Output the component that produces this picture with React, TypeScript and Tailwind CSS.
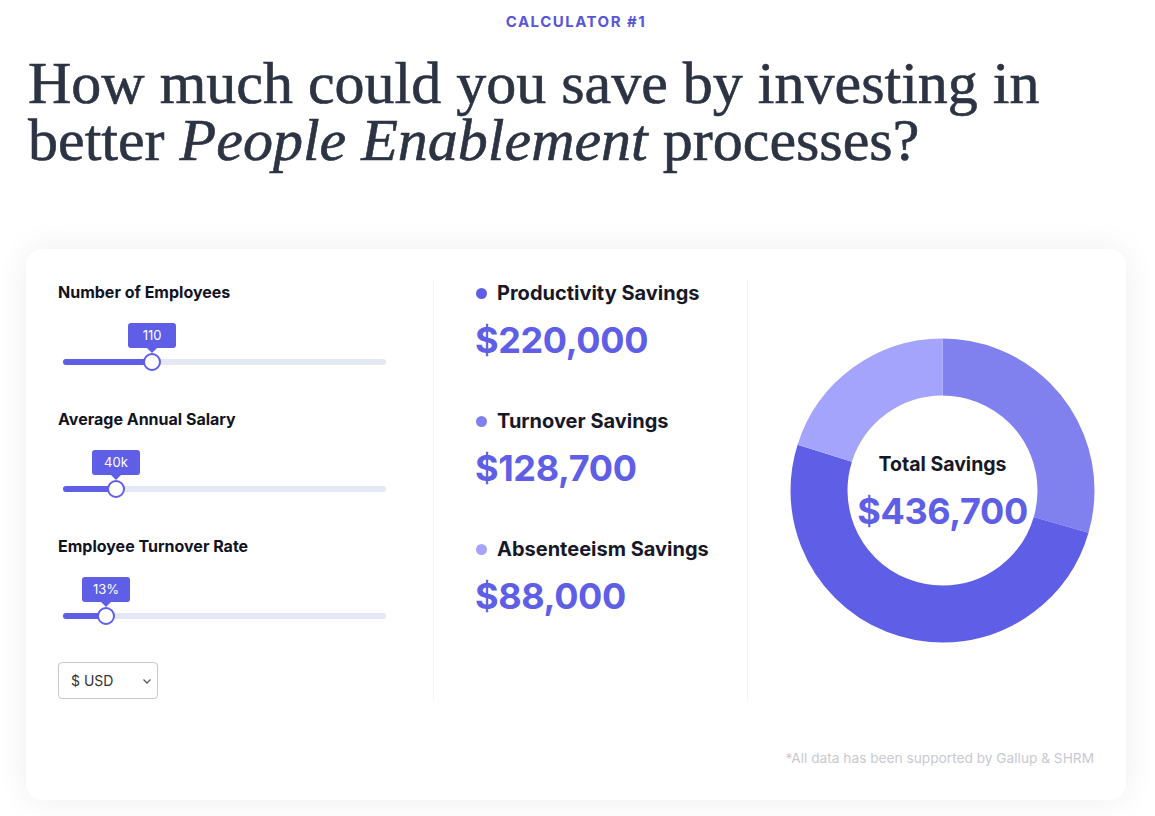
import React from 'react'

const sans = { fontFamily: 'Inter, "Noto Sans", sans-serif' }

type SliderProps = {
  label: string
  value: string
  percent: number
}

const Slider = ({ label, value, percent }: SliderProps) => {
  return (
    <div className="flex flex-col">
      <div className="h-5 text-[16px] font-bold leading-5 text-[#111322]">{label}</div>
      <div className="relative mt-[21px] ml-[5px] h-[42px] w-[323px]">
        <div
          className="absolute top-0 flex -translate-x-1/2 flex-col items-center"
          style={{ left: `${percent}%` }}
        >
          <div className="flex h-[25px] w-12 items-center justify-center rounded-[3px] bg-[#5f5ee6] text-[13px] text-white">
            {value}
          </div>
          <div className="h-0 w-0 border-x-[5px] border-t-[5px] border-x-transparent border-t-[#5f5ee6]" />
        </div>
        <div className="absolute inset-x-0 top-[36px] h-[6px] rounded-full bg-[#e4e8f4]">
          <div
            className="h-full rounded-full bg-[#5f5ee6]"
            style={{ width: `${percent}%` }}
          />
        </div>
        <div
          className="absolute top-[30px] h-[18px] w-[18px] -translate-x-1/2 rounded-full border-2 border-[#5f5ee6] bg-white"
          style={{ left: `${percent}%` }}
        />
      </div>
    </div>
  )
}

type SavingProps = {
  label: string
  amount: string
  dot: string
}

const Saving = ({ label, amount, dot }: SavingProps) => (
  <div className="flex flex-col">
    <div className="flex h-6 items-center">
      <span className={`mr-[10px] ml-[5px] h-[11px] w-[11px] rounded-full ${dot}`} />
      <span className="text-[20px] font-bold text-[#171827]">{label}</span>
    </div>
    <div className="mt-[12px] pl-[4px] text-[36px] leading-[46px] font-bold tracking-[-0.01em] text-[#5f5ee6]">
      {amount}
    </div>
  </div>
)

const Donut = () => {
  const total = 436700
  const parts = [
    { value: 128700, color: '#8080ef' },
    { value: 220000, color: '#5f5ee6' },
    { value: 88000, color: '#a4a4fc' },
  ]
  const r = 123.5
  const c = 2 * Math.PI * r
  let offset = 0

  return (
    <div className="relative h-[305px] w-[305px]">
      <svg width="305" height="305" viewBox="0 0 305 305" className="-rotate-90">
        {parts.map((p) => {
          const len = (p.value / total) * c
          const el = (
            <circle
              key={p.color}
              cx="152.5"
              cy="152.5"
              r={r}
              fill="none"
              stroke={p.color}
              strokeWidth="57"
              strokeDasharray={`${len} ${c - len}`}
              strokeDashoffset={-offset}
            />
          )
          offset += len
          return el
        })}
      </svg>
      <div className="absolute inset-0 flex flex-col items-center justify-center pt-[2px]">
        <div className="text-[19.5px] font-bold text-[#171827]">Total Savings</div>
        <div className="mt-[9px] text-[36px] leading-[44px] font-bold tracking-[-0.01em] text-[#5f5ee6]">
          $436,700
        </div>
      </div>
    </div>
  )
}

export default function App() {
  return (
    <div className="min-h-[816px] bg-white" style={sans}>
      <div className="ml-[26px] w-[1100px] pt-[13px]">
        <div className="text-center text-[15px] leading-[18px] font-bold tracking-[0.1em] text-[#5856d6]">
          CALCULATOR #1
        </div>
        <h1
          className="mt-[24px] pl-[2px] text-[60px] leading-[57px] text-[#2c3342] [-webkit-text-stroke:0.6px_#2c3342]"
          style={{ fontFamily: '"Liberation Serif", "Times New Roman", serif' }}
        >
          How much could you save by investing in
          <br />
          better <em>People Enablement</em> processes?
        </h1>

        <div className="mt-[80px] h-[551px] rounded-2xl bg-white px-8 pt-[31px] shadow-[0_0_32px_rgba(20,20,60,0.07)]">
          <div className="grid h-[420px] grid-cols-[375px_314px_1fr]">
            <div className="flex flex-col gap-[44px] pt-[2px]">
              <Slider label="Number of Employees" value="110" percent={27.6} />
              <Slider label="Average Annual Salary" value="40k" percent={16.4} />
              <Slider label="Employee Turnover Rate" value="13%" percent={13.3} />
              <div className="-mt-[1px] flex h-[37px] w-[100px] items-center justify-between rounded-[4px] border border-[#c9c9cc] pr-[3px] pl-[12px] text-[14px] text-[#333]">
                <span>$ USD</span>
                <svg width="14" height="14" viewBox="0 0 14 14" fill="none">
                  <path d="M3.5 5.5l3.5 3.5 3.5-3.5" stroke="#555a66" strokeWidth="1.3" />
                </svg>
              </div>
            </div>

            <div className="flex flex-col gap-[46px] border-l border-[#f2f2fa] pt-[1px] pl-[37px]">
              <Saving label="Productivity Savings" amount="$220,000" dot="bg-[#5f5ee6]" />
              <Saving label="Turnover Savings" amount="$128,700" dot="bg-[#8080ef]" />
              <Saving label="Absenteeism Savings" amount="$88,000" dot="bg-[#a4a4fc]" />
            </div>

            <div className="border-l border-[#f2f2fa] pt-[58px] pl-[42px]">
              <Donut />
            </div>
          </div>
          <div className="mt-[48px] text-right text-[13.7px] text-[#c9c9cf]">
            *All data has been supported by Gallup &amp; SHRM
          </div>
        </div>
      </div>
    </div>
  )
}
